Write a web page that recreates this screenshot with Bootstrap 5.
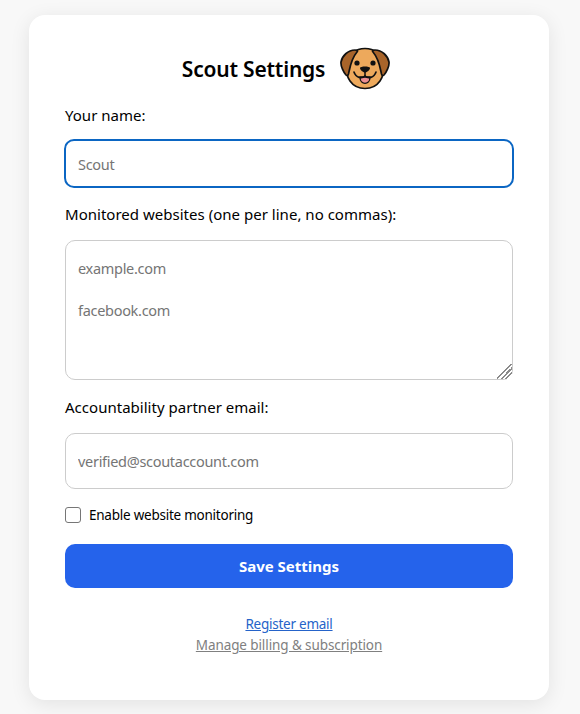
<!DOCTYPE html>
<html lang="en">
<head>
<meta charset="utf-8">
<title>Scout Settings</title>
<link href="https://cdn.jsdelivr.net/npm/bootstrap@5.3.0/dist/css/bootstrap.min.css" rel="stylesheet">
<style>
html,body{height:714px;overflow:hidden}
body{background:#f8f8f8;font-family:"Noto Sans","Open Sans",sans-serif;color:#000;padding:15px 31px 14px 29px}
.sheet{background:#fff;border-radius:16px;box-shadow:0 4px 20px rgba(0,0,0,.09);height:685px;padding:27px 36px 0}
.sheet-title{font-size:21px;font-weight:600;line-height:28px;margin:0;color:#000;letter-spacing:-.2px}
.title-row{height:54px;gap:15px;padding-right:6px;margin-bottom:9px}
.dog-mark{margin-top:-2px}
.field-label{display:block;font-size:15px;line-height:20px;margin:0;letter-spacing:.02px}
.field-input.form-control{border:1px solid #ccc;border-radius:10px;font-size:14.5px;letter-spacing:-.3px;padding:0 12px;color:#000;box-shadow:none}
.field-input::placeholder{color:#757575;opacity:1}
.name-input.form-control{height:49px;margin:14px 0 16px -1px;width:450px;border:2px solid #0b66c3}
.sites-input.form-control{display:block;height:140px;margin:16px 0 17px;padding:6px 12px;line-height:42px;resize:both;min-height:0}
.sites-input::-webkit-resizer{background:linear-gradient(135deg,transparent 45%,#8a8a8a 45% 52%,#fff 52% 60%,#8a8a8a 60% 67%,#fff 67% 75%,#8a8a8a 75% 82%,#fff 82% 100%)}
.mail-input.form-control{height:56px;margin:16px 0 18px}
.check-row{gap:8px;height:16px;margin-bottom:21px}
.check-box.form-check-input{width:16px;height:16px;margin:0;border:1px solid #767676;border-radius:3px}
.check-text{font-size:13.5px;letter-spacing:-.24px;line-height:16px}
.save-btn.btn{display:block;width:100%;height:44px;background:#2563eb;border:0;border-radius:10px;color:#fff;font:700 15px/44px "Noto Sans",sans-serif;padding:0}
.link-stack{margin-top:26px;font-size:13.5px;line-height:21px;letter-spacing:-.1px}
.reg-link{color:#2563c9;letter-spacing:-.25px}
.bill-link{color:#808080}
</style>
</head>
<body>
<main class="sheet">
  <div class="title-row d-flex align-items-center justify-content-center">
    <h1 class="sheet-title">Scout Settings</h1>
    <svg class="dog-mark" width="50" height="43" viewBox="0 0 50 43" aria-hidden="true">
      <path d="M25 1.500C14 1.500 9 9 7.500 17 6 24 7 30 10 34c3.500 5 9 7.500 15 7.500s11.500-2.500 15-7.500c3-4 4-10 2.500-17C41 9 36 1.500 25 1.500z" fill="#eda95c" stroke="#111" stroke-width="1.700"/>
      <path d="M15 3C8 3 2 9 1 15c-.5 4 2.500 10 5 13 1 1 2 .5 2.500-1C10 20 11 12 17 5c1-1 0-2-2-2z" fill="#a8642a" stroke="#111" stroke-width="1.700" stroke-linejoin="round"/>
      <path d="M35 3c7 0 13 6 14 12 .5 4-2.500 10-5 13-1 1-2 .5-2.500-1C40 20 39 12 33 5c-1-1 0-2 2-2z" fill="#a8642a" stroke="#111" stroke-width="1.700" stroke-linejoin="round"/>
      <circle cx="17" cy="16" r="2.600" fill="#111"/>
      <circle cx="33" cy="16" r="2.600" fill="#111"/>
      <path d="M20 30c0 8.500 10 8.500 10 0z" fill="#ec8f92" stroke="#111" stroke-width="1.300"/>
      <path d="M14 25c2 6 8 7 11 4 3 3 9 2 11-4" fill="none" stroke="#111" stroke-width="1.700" stroke-linecap="round"/>
      <path d="M25 29v-4" stroke="#111" stroke-width="1.500"/>
      <path d="M20 21c0-2 10-2 10 0 0 2-3 4.500-5 4.500s-5-2.500-5-4.500z" fill="#111"/>
    </svg>
  </div>
  <form>
    <label class="field-label" for="nm">Your name:</label>
    <input id="nm" class="form-control field-input name-input" type="text" placeholder="Scout">
    <label class="field-label" for="st">Monitored websites (one per line, no commas):</label>
    <textarea id="st" class="form-control field-input sites-input" placeholder="example.com&#10;facebook.com"></textarea>
    <label class="field-label" for="ml">Accountability partner email:</label>
    <input id="ml" class="form-control field-input mail-input" type="email" placeholder="verified@scoutaccount.com">
    <div class="check-row d-flex align-items-center">
      <input id="en" class="form-check-input check-box" type="checkbox">
      <label class="check-text" for="en">Enable website monitoring</label>
    </div>
    <button class="btn save-btn" type="button">Save Settings</button>
  </form>
  <div class="link-stack text-center">
    <div><a class="reg-link" href="#">Register email</a></div>
    <div><a class="bill-link" href="#">Manage billing &amp; subscription</a></div>
  </div>
</main>
<script src="https://cdn.jsdelivr.net/npm/bootstrap@5.3.0/dist/js/bootstrap.bundle.min.js"></script>
</body>
</html>
